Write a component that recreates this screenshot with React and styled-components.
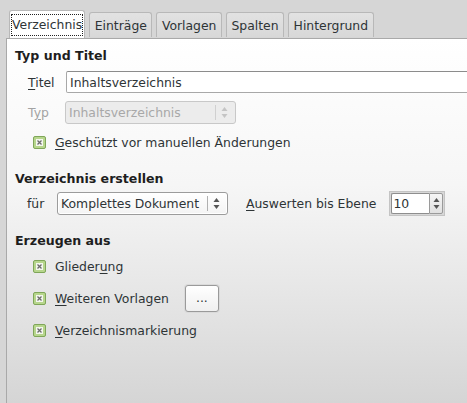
import React from 'react'
import styled, { createGlobalStyle } from 'styled-components'

const Global = createGlobalStyle`
  html, body {
    margin: 0;
    padding: 0;
    overflow: hidden;
  }
  body {
    font-family: "DejaVu Sans", "Liberation Sans", sans-serif;
    font-size: 12.4px;
    color: #2e3436;
  }
`

const Page = styled.div`
  width: 467px;
  height: 403px;
  background: #d6d6d6;
  padding: 10px 0 0 6px;
  box-sizing: border-box;
  display: flex;
  flex-direction: column;
  overflow: hidden;
`

const TabBar = styled.div`
  display: flex;
  gap: 4px;
  padding-left: 3px;
  position: relative;
  z-index: 1;
`

const Tab = styled.div`
  height: ${(p) => (p.active ? 28 : 25)}px;
  box-sizing: border-box;
  padding: 0 ${(p) => (p.active ? 1 : 4.5)}px;
  display: flex;
  align-items: center;
  justify-content: center;
  border: 1px solid #b8b8b8;
  border-bottom: none;
  border-radius: 3px 3px 0 0;
  background: ${(p) => (p.active ? '#fff' : 'linear-gradient(#e2e2e2, #d8d8d8)')};
  margin-bottom: ${(p) => (p.active ? -1 : 0)}px;
  align-self: flex-end;
`

const Focus = styled.span`
  border: 1px dotted #222;
  padding: 2px 0 3px;
  line-height: 15px;
`

const Panel = styled.div`
  flex: 1;
  width: 520px;
  border-top: 1px solid #a9a9a9;
  border-left: 1px solid #a9a9a9;
  margin-top: 1px;
  background: linear-gradient(#ffffff 0%, #f6f6f6 40%, #e6e6e6 70%, #d5d5d5 100%);
  padding: 9px 0 0 8px;
  display: flex;
  flex-direction: column;
`

const Heading = styled.div`
  font-weight: bold;
  font-size: 12.6px;
  height: 16px;
  line-height: 16px;
  margin-top: ${(p) => p.top || 0}px;
  color: #1e1e1e;
`

const Row = styled.div`
  display: flex;
  align-items: center;
  height: ${(p) => p.h || 22}px;
  margin-top: ${(p) => p.top || 0}px;
  padding-left: ${(p) => p.indent || 13}px;
`

const Label = styled.span`
  width: ${(p) => (p.w ? `${p.w}px` : 'auto')};
  margin-left: ${(p) => p.before || 0}px;
  color: ${(p) => (p.disabled ? '#a3a3a3' : '#2e3436')};
  white-space: nowrap;
`

const U = styled.span`
  text-decoration: underline;
  text-underline-offset: 2px;
`

const TextField = styled.div`
  flex: 1;
  height: 22px;
  box-sizing: border-box;
  border: 1px solid #a8a8a8;
  border-top-color: #8c8c8c;
  border-radius: 2px;
  background: #fff;
  padding-left: 3px;
  display: flex;
  align-items: center;
`

const Select = styled.div`
  width: ${(p) => p.w}px;
  height: 23px;
  box-sizing: border-box;
  border: 1px solid ${(p) => (p.disabled ? '#c8c8c8' : '#9c9c9c')};
  border-radius: 3px;
  background: ${(p) => (p.disabled ? '#ececec' : 'linear-gradient(#ffffff, #f4f4f4)')};
  color: ${(p) => (p.disabled ? '#a8a8a8' : '#2e3436')};
  display: flex;
  align-items: center;
  padding-left: 3px;
  box-shadow: ${(p) => (p.disabled ? 'none' : 'inset 0 0 0 1px #fff')};
`

const SelectText = styled.span`
  flex: 1;
  white-space: nowrap;
`

const Divider = styled.span`
  width: 1px;
  height: 15px;
  background: ${(p) => (p.disabled ? '#d0d0d0' : '#b0b0b0')};
  margin-right: 5px;
`

const Arrows = ({ color = '#555', gap = 7 }) => (
  <svg width="7" height="13" viewBox="0 0 7 13" style={{ marginRight: gap }}>
    <path d="M3.5 1 L6.5 5 L0.5 5 Z" fill={color} />
    <path d="M3.5 12 L6.5 8 L0.5 8 Z" fill={color} />
  </svg>
)

const Spin = styled.div`
  margin-left: 13px;
  width: 56px;
  height: 25px;
  box-sizing: border-box;
  border: 1px solid #c4c4c4;
  background: #d8d8d8;
  padding: 1px;
  display: flex;
`

const SpinField = styled.div`
  flex: 1;
  background: #fff;
  border: 1px solid #8e8e8e;
  border-right: none;
  border-radius: 2px 0 0 2px;
  display: flex;
  align-items: center;
  padding-left: 1px;
`

const SpinButton = styled.div`
  width: 12px;
  border: 1px solid #9a9a9a;
  border-radius: 0 2px 2px 0;
  background: linear-gradient(#f6f6f6, #e0e0e0);
  display: flex;
  align-items: center;
  justify-content: center;
`

const CheckRow = styled(Row)`
  padding-left: 18px;
`

const Box = styled.span`
  width: 13px;
  height: 13px;
  margin-right: 9px;
  display: inline-flex;
`

const Check = () => (
  <Box>
    <svg width="13" height="13" viewBox="0 0 13 13">
      <rect x="0.5" y="0.5" width="12" height="12" rx="1.5" fill="#b7d68d" stroke="#7fa659" />
      <rect x="3" y="3" width="7" height="7" fill="#f4f7ef" />
      <path d="M4.5 4.5 L8.5 8.5 M8.5 4.5 L4.5 8.5" stroke="#6b6b6b" strokeWidth="1.3" />
    </svg>
  </Box>
)

const DotsButton = styled.div`
  margin-left: 16px;
  width: 34px;
  height: 27px;
  box-sizing: border-box;
  border: 1px solid #9a9a9a;
  border-radius: 3px;
  background: linear-gradient(#ffffff, #f0f0f0);
  box-shadow: 0 0 0 1px #dadada;
  display: flex;
  align-items: center;
  justify-content: center;
  padding-bottom: 2px;
`

const tabs = ['Verzeichnis', 'Einträge', 'Vorlagen', 'Spalten', 'Hintergrund']

export default function App() {
  return (
    <Page>
      <Global />
      <TabBar>
        {tabs.map((t, i) => (
          <Tab key={t} active={i === 0}>
            {i === 0 ? <Focus>{t}</Focus> : t}
          </Tab>
        ))}
      </TabBar>
      <Panel>
        <Heading>Typ und Titel</Heading>
        <Row top={7}>
          <Label w={38}><U>T</U>itel</Label>
          <TextField>Inhaltsverzeichnis</TextField>
        </Row>
        <Row top={8} h={23}>
          <Label w={37} disabled>T<U>y</U>p</Label>
          <Select w={171} disabled>
            <SelectText>Inhaltsverzeichnis</SelectText>
            <Divider disabled />
            <Arrows color="#c4c4c4" />
          </Select>
        </Row>
        <CheckRow top={7}>
          <Check />
          <Label><U>G</U>eschützt vor manuellen Änderungen</Label>
        </CheckRow>

        <Heading top={18}>Verzeichnis erstellen</Heading>
        <Row top={5} h={23} indent={12}>
          <Label w={30}>für</Label>
          <Select w={171}>
            <SelectText>Komplettes Dokument</SelectText>
            <Divider />
            <Arrows />
          </Select>
          <Label before={18}><U>A</U>uswerten bis Ebene</Label>
          <Spin>
            <SpinField>10</SpinField>
            <SpinButton>
              <Arrows gap={0} />
            </SpinButton>
          </Spin>
        </Row>

        <Heading top={18}>Erzeugen aus</Heading>
        <CheckRow top={6}>
          <Check />
          <Label>Glieder<U>u</U>ng</Label>
        </CheckRow>
        <CheckRow top={5} h={32}>
          <Check />
          <Label><U>W</U>eiteren Vorlagen</Label>
          <DotsButton>...</DotsButton>
        </CheckRow>
        <CheckRow top={5}>
          <Check />
          <Label><U>V</U>erzeichnismarkierung</Label>
        </CheckRow>
      </Panel>
    </Page>
  )
}
